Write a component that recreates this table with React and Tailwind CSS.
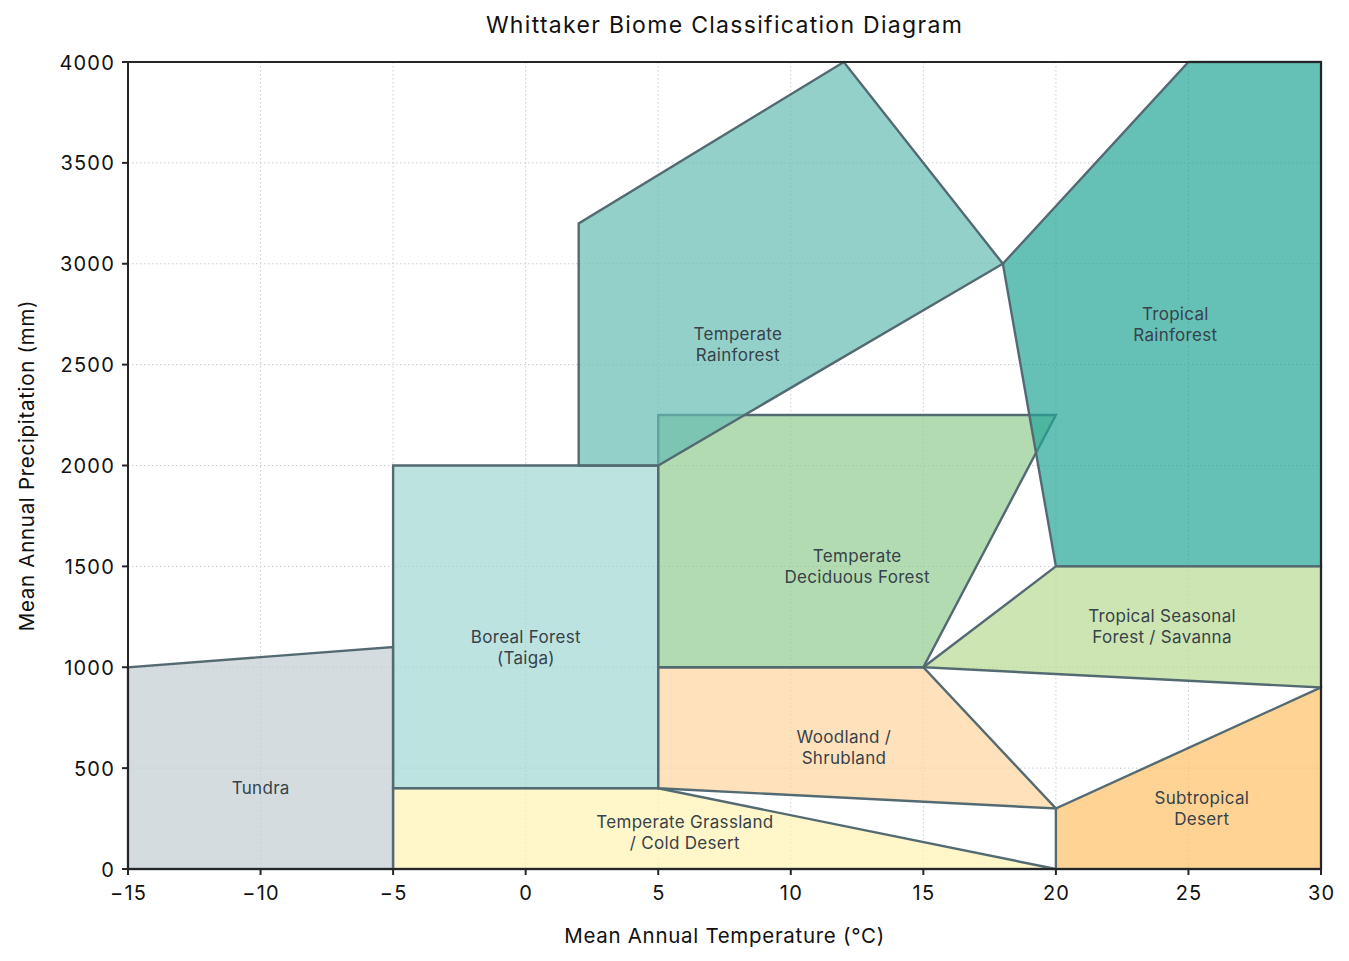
import React from 'react';

const X0 = 128;
const X1 = 1321;
const Y0 = 869;
const Y1 = 62;

const px = (t) => X0 + ((t + 15) / 45) * (X1 - X0);
const py = (p) => Y0 - (p / 4000) * (Y0 - Y1);

const EDGE = '#546a73';

// drawn in order, later ones sit on top
const biomes = [
    { name: ['Tundra'], at: [-10, 400], fill: '#c3cdd3', pts: [[-15, 0], [-15, 1000], [-5, 1100], [-5, 0]] },
    { name: ['Boreal Forest', '(Taiga)'], at: [0, 1100], fill: '#9fd7d1', pts: [[-5, 400], [-5, 2000], [5, 2000], [5, 400]] },
    { name: ['Temperate Grassland', '/ Cold Desert'], at: [6, 180], fill: '#fff4b2', pts: [[-5, 0], [-5, 400], [5, 400], [20, 0]] },
    { name: ['Woodland /', 'Shrubland'], at: [12, 600], fill: '#ffd69e', pts: [[5, 400], [5, 1000], [15, 1000], [20, 300]] },
    { name: ['Temperate', 'Deciduous Forest'], at: [12.5, 1500], fill: '#91cc92', pts: [[5, 1000], [5, 2250], [20, 2250], [15, 1000]] },
    { name: ['Temperate', 'Rainforest'], at: [8, 2600], fill: '#65bcb2', pts: [[2, 2000], [2, 3200], [12, 4000], [18, 3000], [5, 2000]] },
    { name: ['Tropical', 'Rainforest'], at: [24.5, 2700], fill: '#24a597', pts: [[18, 3000], [25, 4000], [30, 4000], [30, 1500], [20, 1500]] },
    { name: ['Tropical Seasonal', 'Forest / Savanna'], at: [24, 1200], fill: '#b8da92', pts: [[15, 1000], [20, 1500], [30, 1500], [30, 900]] },
    { name: ['Subtropical', 'Desert'], at: [25.5, 300], fill: '#ffc065', pts: [[20, 0], [20, 300], [30, 900], [30, 0]] },
];

const xTicks = [-15, -10, -5, 0, 5, 10, 15, 20, 25, 30];
const yTicks = [0, 500, 1000, 1500, 2000, 2500, 3000, 3500, 4000];

const fmt = (n) => (n < 0 ? '\u2212' + Math.abs(n) : String(n));

const FONT = "Inter, 'Open Sans', sans-serif";

const Chart = () => (
    <svg width="1349" height="911" viewBox="0 50 1349 911" className="block">
        {/* grid */}
        <g stroke="#c8cdd0" strokeWidth="1" strokeDasharray="1.5 2.5">
            {xTicks.map((t) => (
                <line key={'gx' + t} x1={px(t)} x2={px(t)} y1={Y1} y2={Y0} />
            ))}
            {yTicks.map((p) => (
                <line key={'gy' + p} x1={X0} x2={X1} y1={py(p)} y2={py(p)} />
            ))}
        </g>

        {/* biome polygons */}
        {biomes.map((b) => (
            <polygon
                key={b.name.join(' ')}
                points={b.pts.map(([t, p]) => `${px(t)},${py(p)}`).join(' ')}
                fill={b.fill}
                fillOpacity="0.7"
                stroke={EDGE}
                strokeWidth="2.4"
                strokeLinejoin="miter"
            />
        ))}

        {/* labels */}
        <g fontFamily={FONT} fontSize="17" letterSpacing="0.3" fill="#37424a" textAnchor="middle">
            {biomes.map((b) => {
                const cx = px(b.at[0]) + 0.15;
                const cy = py(b.at[1]);
                const n = b.name.length;
                return (
                    <text key={'l' + b.name.join(' ')} x={cx} y={cy - ((n - 1) * 21) / 2 + 6}>
                        {b.name.map((line, i) => (
                            <tspan key={i} x={cx} dy={i === 0 ? 0 : 21}>
                                {line}
                            </tspan>
                        ))}
                    </text>
                );
            })}
        </g>

        {/* spines */}
        <rect x={X0} y={Y1} width={X1 - X0} height={Y0 - Y1} fill="none" stroke="#262626" strokeWidth="2" />

        {/* ticks */}
        <g stroke="#262626" strokeWidth="2">
            {xTicks.map((t) => (
                <line key={'tx' + t} x1={px(t)} x2={px(t)} y1={Y0} y2={Y0 + 6} />
            ))}
            {yTicks.map((p) => (
                <line key={'ty' + p} x1={X0 - 6} x2={X0} y1={py(p)} y2={py(p)} />
            ))}
        </g>
        <g fontFamily={FONT} fontSize="20" letterSpacing="1.2" fill="#111">
            {xTicks.map((t) => (
                <text key={'lx' + t} x={px(t) + 0.6} y={Y0 + 30.5} textAnchor="middle">
                    {fmt(t)}
                </text>
            ))}
            {yTicks.map((p) => (
                <text key={'ly' + p} x={X0 - 13} y={py(p) + 7.5} textAnchor="end">
                    {p}
                </text>
            ))}
        </g>

        {/* axis titles */}
        <g fontFamily={FONT} fontSize="20.5" letterSpacing="0.7" fill="#111" textAnchor="middle">
            <text x={(X0 + X1) / 2} y={943}>
                Mean Annual Temperature (°C)
            </text>
            <text x={0} y={0} transform={`translate(34 ${(Y0 + Y1) / 2}) rotate(-90)`}>
                Mean Annual Precipitation (mm)
            </text>
        </g>
    </svg>
);

const App = () => {
    return (
        <div className="w-[1349px] h-[961px] bg-white overflow-hidden font-['Inter',sans-serif]">
            <div className="h-[50px] ml-[100px] w-[1249px] flex items-center justify-center pt-[1px]">
                <h1 className="text-[23px] tracking-[1.3px] text-[#111] leading-none">Whittaker Biome Classification Diagram</h1>
            </div>
            <Chart />
        </div>
    );
};

export default App;
